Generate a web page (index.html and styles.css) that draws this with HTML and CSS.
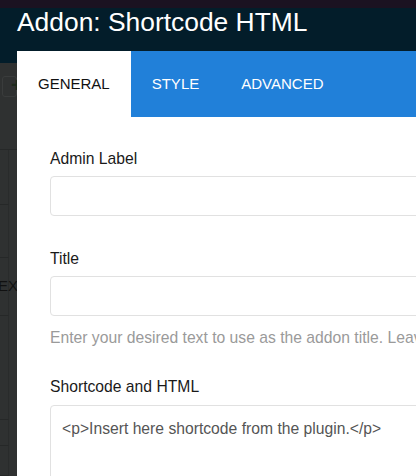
FILE: index.html
```html
<!DOCTYPE html>
<html>
<head>
<meta charset="utf-8">
<link rel="stylesheet" href="styles.css">
</head>
<body>
<div class="page">
  <div class="topbar"></div>
  <header class="addon-header"><h1 class="addon-title">Addon: Shortcode HTML</h1></header>
  <div class="backdrop">
    <div class="bd-row bd-first"><span class="bd-btn"><span class="bd-plus">+</span></span></div>
    <div class="bd-row bd-r2"></div>
    <div class="bd-row bd-r3"></div>
    <div class="bd-row bd-r4"><span class="bd-text">EXPORT</span></div>
    <div class="bd-row bd-r5"></div>
    <div class="bd-row bd-r6"></div>
    <div class="bd-row bd-r7"></div>
  </div>
</div>
<div class="modal">
  <nav class="tabs">
    <div class="tab active">GENERAL</div>
    <div class="tab">STYLE</div>
    <div class="tab">ADVANCED</div>
  </nav>
  <div class="content">
    <div class="field">
      <label class="label">Admin Label</label>
      <div class="input"></div>
    </div>
    <div class="field">
      <label class="label">Title</label>
      <div class="input"></div>
      <p class="help">Enter your desired text to use as the addon title. Leave blank to hide the title.</p>
    </div>
    <div class="field field-code">
      <label class="label">Shortcode and HTML</label>
      <div class="textarea">&lt;p&gt;Insert here shortcode from the plugin.&lt;/p&gt;</div>
    </div>
  </div>
</div>
</body>
</html>
```
FILE: styles.css
```css
html, body {
  margin: 0;
  padding: 0;
}
body {
  width: 416px;
  height: 476px;
  overflow: hidden;
  position: relative;
  font-family: "Liberation Sans", Arial, sans-serif;
  background: #2f3131;
}
.page {
  display: flex;
  flex-direction: column;
  height: 476px;
}
.topbar {
  height: 8px;
  background: #1b1221;
}
.addon-header {
  height: 57px;
  background: #031d2a;
}
.addon-title {
  margin: 0;
  padding-left: 17px;
  font-weight: normal;
  font-size: 26.4px;
  line-height: 28px;
  color: #ffffff;
}
.backdrop {
  flex: 1;
  display: flex;
  flex-direction: column;
  background: #2f3131;
}
.bd-row {
  border-bottom: 1px solid #262828;
  box-sizing: border-box;
  border-right: 1px solid #292b2b;
  width: 9px;
  position: relative;
}
.bd-first { height: 87px; width: 17px; border-right: none; padding-top: 13px; }
.bd-btn {
  display: block;
  margin-left: 2px;
  height: 19px;
  border: 1px solid #3a3c3c;
  border-radius: 3px;
  position: relative;
}
.bd-plus {
  position: absolute;
  left: 8px;
  top: -3px;
  font-size: 20px;
  font-weight: bold;
  color: #1d2a1c;
}
.bd-r2 { height: 55px; }
.bd-r3 { height: 53px; }
.bd-r4 { height: 58px; }
.bd-r5 { height: 104px; }
.bd-r6 { height: 26px; }
.bd-r7 { height: 30px; }
.bd-text {
  position: absolute;
  left: -2px;
  top: 19px;
  font-size: 15px;
  color: #111;
  white-space: nowrap;
}
.modal {
  position: absolute;
  left: 17px;
  top: 51px;
  width: 720px;
  height: 470px;
  background: #ffffff;
}
.tabs {
  display: flex;
  height: 66px;
  background: #2180d9;
}
.tab {
  padding: 0 21px;
  font-size: 15px;
  line-height: 66px;
  color: #ffffff;
}
.tab.active {
  background: #ffffff;
  color: #111111;
}
.content {
  padding: 32px 0 0 33px;
  display: flex;
  flex-direction: column;
  gap: 33px;
}
.field {
  display: flex;
  flex-direction: column;
}
.field-code {
  margin-top: -4px;
}
.label {
  display: block;
  font-size: 15.7px;
  line-height: 20px;
  color: #1a1a1a;
  margin-bottom: 7px;
}
.input {
  width: 600px;
  height: 40px;
  box-sizing: border-box;
  border: 1px solid #e1e1e1;
  border-radius: 4px;
}
.help {
  margin: 12px 0 0;
  font-size: 15.7px;
  line-height: 20px;
  color: #9a9a9a;
  white-space: nowrap;
}
.textarea {
  width: 600px;
  height: 120px;
  box-sizing: border-box;
  border: 1px solid #e1e1e1;
  border-radius: 4px;
  padding: 13px 11px;
  font-size: 15.7px;
  line-height: 20px;
  color: #555555;
  margin-top: 1px;
}
```
